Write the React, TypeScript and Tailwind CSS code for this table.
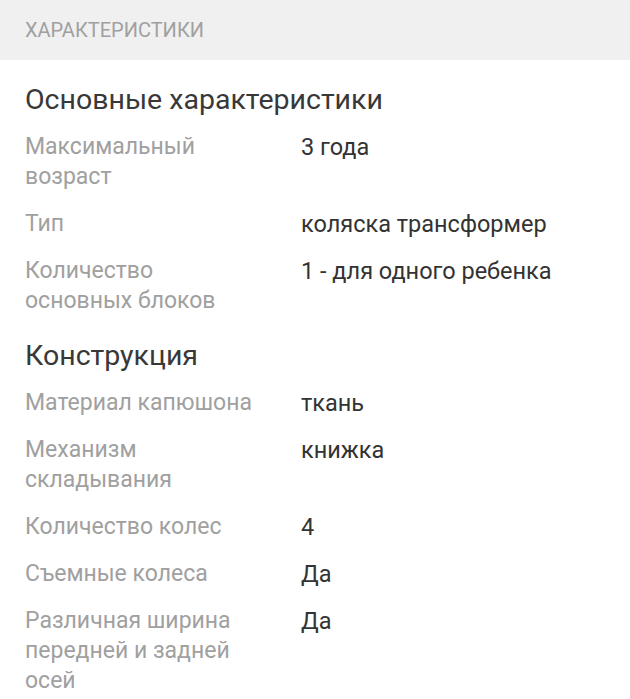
const groups = [
  {
    title: 'Основные характеристики',
    rows: [
      { label: ['Максимальный', 'возраст'], value: '3 года' },
      { label: ['Тип'], value: 'коляска трансформер' },
      { label: ['Количество', 'основных блоков'], value: '1 - для одного ребенка' },
    ],
  },
  {
    title: 'Конструкция',
    rows: [
      { label: ['Материал капюшона'], value: 'ткань' },
      { label: ['Механизм', 'складывания'], value: 'книжка' },
      { label: ['Количество колес'], value: '4' },
      { label: ['Съемные колеса'], value: 'Да' },
      { label: ['Различная ширина', 'передней и задней', 'осей'], value: 'Да' },
    ],
  },
]

export default function App() {
  return (
    <div className="min-h-[699px] bg-white font-['Roboto',sans-serif]">
      {/* Section header */}
      <div className="flex h-[60px] items-center bg-[#f0f0f0] px-[25px]">
        <span className="text-[20px] uppercase text-[#a0a0a0]">Характеристики</span>
      </div>

      <div className="px-[25px]">
        {groups.map((group) => (
          <div key={group.title} className="mt-[23px]">
            <h2 className="text-[28.5px] leading-[34px] text-[#383838]">{group.title}</h2>
            <div className="mt-[15px] flex flex-col gap-[17px]">
              {group.rows.map((row) => (
                <div key={row.label.join(' ')} className="grid grid-cols-[276px_1fr] text-[23px] leading-[30px]">
                  <div className="text-[#a0a0a0]">
                    {row.label.map((line) => (
                      <div key={line}>{line}</div>
                    ))}
                  </div>
                  <div className="text-[23.5px] text-[#333333]">{row.value}</div>
                </div>
              ))}
            </div>
          </div>
        ))}
      </div>
    </div>
  )
}
